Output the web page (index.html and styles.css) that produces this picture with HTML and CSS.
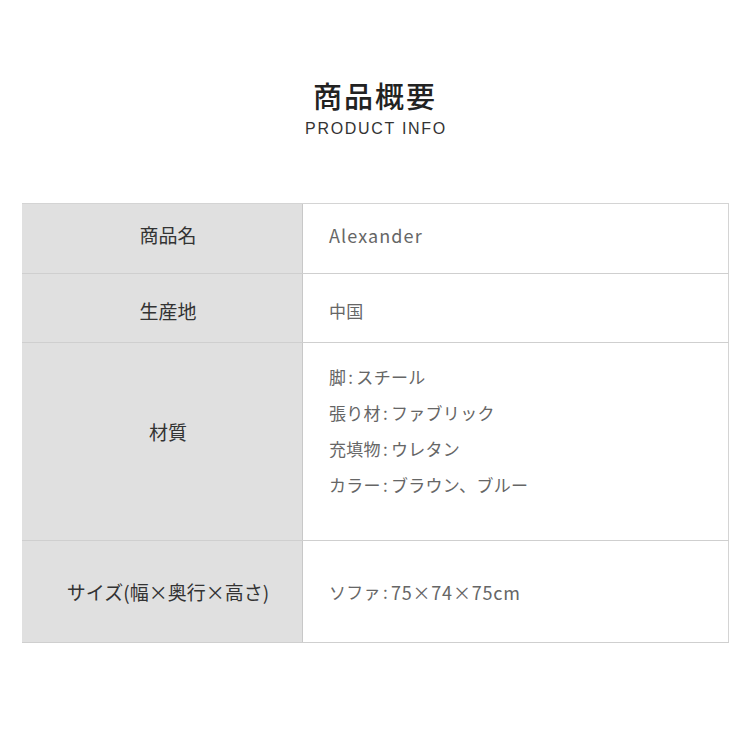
FILE: index.html
```html
<!DOCTYPE html>
<html lang="ja">
<head>
<meta charset="utf-8">
<link rel="stylesheet" href="styles.css">
</head>
<body>
<div class="page">
  <header class="head">
    <h1 class="title">商品概要</h1>
    <p class="sub">PRODUCT INFO</p>
  </header>
  <div class="spec">
    <div class="row r1">
      <div class="label">商品名</div>
      <div class="value"><span class="latin">Alexander</span></div>
    </div>
    <div class="row r2">
      <div class="label">生産地</div>
      <div class="value">中国</div>
    </div>
    <div class="row r3">
      <div class="label">材質</div>
      <div class="value list">
        <span>脚<span class="c">:</span>スチール</span>
        <span>張り材<span class="c">:</span>ファブリック</span>
        <span>充填物<span class="c">:</span>ウレタン</span>
        <span>カラー<span class="c">:</span>ブラウン、ブルー</span>
      </div>
    </div>
    <div class="row r4">
      <div class="label">サイズ(幅×奥行×高さ)</div>
      <div class="value">ソファ<span class="c">:</span><span class="num">75×74×75cm</span></div>
    </div>
  </div>
</div>
</body>
</html>
```
FILE: styles.css
```css
* { box-sizing: border-box; }
html, body { margin: 0; padding: 0; background: #fff; }
body {
  font-family: "Noto Sans CJK JP", "Noto Sans", sans-serif;
  width: 750px;
  height: 750px;
  overflow: hidden;
}
.page { padding-top: 75px; }
.head { text-align: center; }
.title {
  margin: 0;
  font-size: 29px;
  line-height: 40px;
  font-weight: 500;
  color: #222;
  letter-spacing: 2px;
}
.sub {
  margin: 5px 0 0;
  padding-left: 2px;
  font-family: "Liberation Sans", "Noto Sans", sans-serif;
  font-size: 16px;
  line-height: 18px;
  letter-spacing: 1.7px;
  color: #333;
}
.spec {
  margin: 65px 0 0 22px;
  width: 707px;
  border-top: 1px solid #d4d4d4;
}
.row {
  display: grid;
  grid-template-columns: 281px 1fr;
  border-bottom: 1px solid #cfcfcf;
}
.r1 { height: 70px; }
.r1 .label, .r1 .value { padding-bottom: 8px; }
.r2 { height: 69px; }
.r2 .label, .r2 .value { padding-top: 4px; }
.r3 { height: 198px; }
.r4 { height: 102px; }
.label {
  background: #e0e0e0;
  color: #333;
  font-size: 19px;
  display: flex;
  align-items: center;
  justify-content: center;
  padding-left: 12px;
  border-right: 1px solid #c8c8c8;
}
.value {
  color: #666;
  font-size: 17px;
  letter-spacing: 0.3px;
  display: flex;
  align-items: center;
  padding-left: 26px;
  border-right: 1px solid #d4d4d4;
}
.latin {
  font-size: 18px;
  letter-spacing: 1.1px;
}
.c {
  padding: 0 3px 0 2px;
}
.num {
  font-size: 18px;
  letter-spacing: 0.8px;
}
.value.list {
  flex-direction: column;
  align-items: flex-start;
  justify-content: flex-start;
  padding-top: 16px;
  line-height: 36px;
}
.r3 .label { padding-bottom: 20px; }
```
